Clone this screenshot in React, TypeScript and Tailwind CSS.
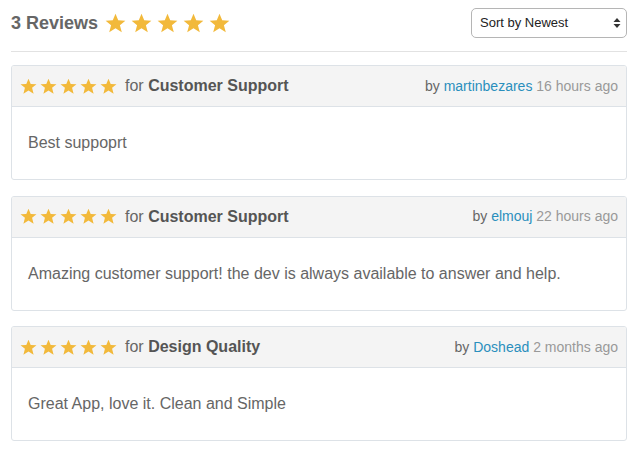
const reviews = [
  { topic: 'Customer Support', author: 'martinbezares', when: '16 hours ago', text: 'Best suppoprt' },
  { topic: 'Customer Support', author: 'elmouj', when: '22 hours ago', text: 'Amazing customer support! the dev is always available to answer and help.' },
  { topic: 'Design Quality', author: 'Doshead', when: '2 months ago', text: 'Great App, love it. Clean and Simple' },
];

function Star({ size }: { size: number }) {
  return (
    <svg width={size} height={size} viewBox="0 0 20 20" className="shrink-0">
      <polygon
        fill="#f2b93b"
        points="10,0.8 12.6,7 19.4,7.3 14.2,11.6 16,18.4 10,14.6 4,18.4 5.8,11.6 0.6,7.3 7.4,7"
      />
    </svg>
  );
}

function Stars({ size, gap }: { size: number; gap: string }) {
  return (
    <div className={`flex items-center ${gap}`}>
      {[0, 1, 2, 3, 4].map((i) => (
        <Star key={i} size={size} />
      ))}
    </div>
  );
}

export default function App() {
  return (
    <div className="w-[638px] h-[452px] bg-white px-[11px] font-['Liberation_Sans',Arial,sans-serif] overflow-hidden">
      {/* top bar */}
      <div className="flex items-center justify-between pt-[8px] h-[38px]">
        <div className="flex items-center gap-[7px]">
          <h2 className="text-[18px] font-bold text-[#666] leading-none">3 Reviews</h2>
          <Stars size={21} gap="gap-[5px]" />
        </div>
        <div className="w-[156px] h-[30px] border border-[#b5b5b5] rounded-[5px] flex items-center justify-between pl-[8px] pr-[5px] text-[13px] text-[#222] bg-white">
          <span>Sort by Newest</span>
          <svg width="8" height="12" viewBox="0 0 8 12">
            <polygon points="4,1 7.5,5 0.5,5" fill="#333" />
            <polygon points="0.5,7 7.5,7 4,11" fill="#333" />
          </svg>
        </div>
      </div>
      <div className="mt-[13px] border-t border-[#e2e2e2]" />

      {/* cards */}
      <div className="mt-[13px] flex flex-col gap-[15.5px]">
        {reviews.map((r, i) => (
          <div key={i} className="border border-[#dde2e7] rounded-[3px] overflow-hidden">
            <div className="h-[41px] bg-[#f4f4f4] border-b border-[#dde2e7] flex items-center justify-between pl-[8px] pr-[8px]">
              <div className="flex items-center gap-[8px]">
                <Stars size={17} gap="gap-[3px]" />
                <span className="text-[16px] text-[#666]">
                  for <b className="font-bold text-[#555]">{r.topic}</b>
                </span>
              </div>
              <div className="text-[14px] text-[#666]">
                by <a className="text-[#2a8fbd]">{r.author}</a>{' '}
                <span className="text-[#999]">{r.when}</span>
              </div>
            </div>
            <div className="h-[72px] flex items-center px-[16px] text-[16px] text-[#666]">{r.text}</div>
          </div>
        ))}
      </div>
    </div>
  );
}
